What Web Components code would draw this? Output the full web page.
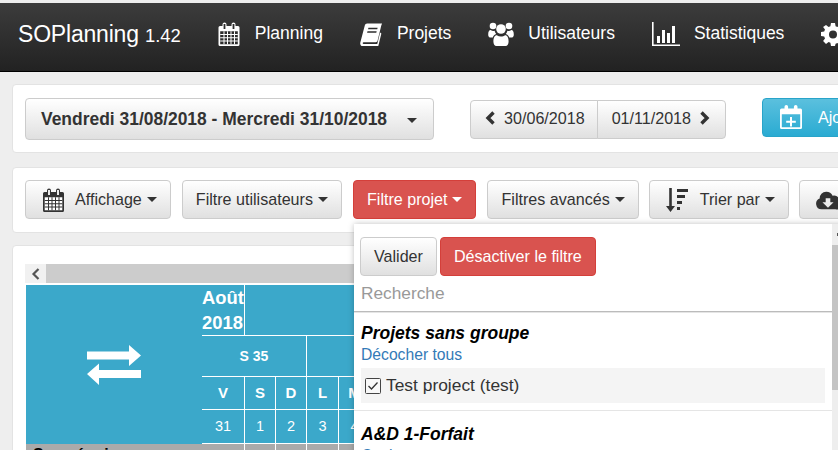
<!DOCTYPE html>
<html lang="fr">
<head>
<meta charset="utf-8">
<title>SOPlanning</title>
<style>
  html, body { margin: 0; height: 450px; overflow: hidden; background: #eee; }
  body { font: 16px/1.43 "Liberation Sans", Arial, sans-serif; color: #333; }
  so-card.c1 { margin-top: 12px; height: 69px; padding: 13px 12px; }
  so-card.c2 { margin-top: 14px; height: 66px; padding: 12px 12px; }
  so-card.c3 { margin-top: 12px; height: 300px; padding: 18px 12px; }
  .g1 { margin-right: 36px; height: 42px; }
  .pager { display: inline-flex; flex: none; margin-right: 36px; height: 39px; }
  .f { height: 39px; margin-right: 11px; }
  .f svg { margin-right: 12px; margin-top: 2px; }
</style>
</head>
<body>
<svg width="0" height="0" style="position:absolute">
  <defs>
    <symbol id="i-cal" viewBox="0 0 24 24">
      <path fill="currentColor" d="M3 4h2.500V2.600a2 2 0 0 1 4 0V4h5V2.600a2 2 0 0 1 4 0V4H21a1.500 1.500 0 0 1 1.500 1.500v17A1.500 1.500 0 0 1 21 24H3a1.500 1.500 0 0 1-1.500-1.500v-17A1.500 1.500 0 0 1 3 4z"/>
      <path fill="var(--i-bg,#2d2d2d)" d="M6.600 1.900h1.800v5H6.600zM15.600 1.900h1.800v5h-1.800zM3.200 9.200h17.600v13H3.200z"/>
      <path fill="currentColor" d="M3.200 12.100h17.600v1H3.200zM3.200 15.300h17.600v1H3.200zM3.200 18.500h17.600v1H3.200zM6.500 9.200h1v13h-1zM10 9.200h1v13h-1zM13.500 9.200h1v13h-1zM17 9.200h1v13h-1z"/>
    </symbol>
    <symbol id="i-book" viewBox="0 0 24 24">
      <path fill="currentColor" d="M7.500 1H23l-.8 2.200-3.800 15.600c-.3 1-.8 1.700-2.200 1.700H4.200c-.8 0-1.400.3-1.400 1 0 .6.600 1 1.400 1H18l3-12 1.300 1-3 12.300c-.2.700-.6 1.200-1.500 1.200H4c-2.200 0-3.800-1.300-3.800-3.200 0-.7.200-1.300.4-2L5 3c.3-1.200 1.200-2 2.500-2z"/>
      <path fill="var(--i-bg,#2d2d2d)" d="M8.800 5.500h9.600l-.4 1.600H8.400zM7.800 9h9.600l-.4 1.600H7.400z"/>
    </symbol>
    <symbol id="i-users" viewBox="0 0 26 24">
      <circle fill="currentColor" cx="5" cy="4" r="3.300"/>
      <circle fill="currentColor" cx="21" cy="4" r="3.300"/>
      <circle fill="currentColor" cx="13" cy="7" r="4.800"/>
      <path fill="currentColor" d="M.2 12.500c0-3 .8-4.500 2.500-4.500 1.200.9 2.600 1.100 3.900.7.200 1.200.8 2.300 1.600 3.200-1.600.4-2.900 1.600-3.400 3.600H2c-1.200 0-1.800-1.400-1.800-3zM25.800 12.500c0-3-.8-4.500-2.500-4.500-1.200.9-2.600 1.100-3.900.7-.2 1.200-.8 2.300-1.600 3.200 1.600.4 2.900 1.600 3.400 3.600H24c1.200 0 1.800-1.400 1.800-3zM8.800 13.200c2.500 1.800 5.900 1.800 8.400 0 2.200 0 3.400 2.500 3.400 6.300 0 2.500-1.200 4.500-3 4.500H8.400c-1.800 0-3-2-3-4.500 0-3.800 1.200-6.300 3.400-6.300z"/>
    </symbol>
    <symbol id="i-chart" viewBox="0 0 28 24">
      <path fill="currentColor" d="M0 0h1.600v22.400H28V24H0zM5 14h3v7H5zM10 8h3v13h-3zM15 11h3v10h-3zM20 4h3v17h-3z"/>
    </symbol>
    <symbol id="i-cog" viewBox="0 0 24 24">
      <path fill="currentColor" fill-rule="evenodd" d="M10 1h4l.6 3.200 1.800.8L19 3.100l2.900 2.900L20 8.600l.8 1.800 3.200.6v4l-3.200.6-.8 1.800 1.900 2.600-2.900 2.900-2.600-1.900-1.800.8L14 24h-4l-.6-3.200-1.800-.8L5 21.900 2.100 19 4 16.400l-.8-1.800L0 14v-4l3.200-.6.800-1.800L2.100 5 5 3.100 7.600 5l1.800-.8zM12 8.500a4 4 0 1 0 0 8 4 4 0 0 0 0-8z"/>
    </symbol>
    <symbol id="i-calplus" viewBox="0 0 24 24">
      <path fill="currentColor" fill-rule="evenodd" d="M2.500 3.500h3V1.800a1.800 1.800 0 0 1 3.600 0v1.700h5.800V1.800a1.800 1.800 0 0 1 3.600 0v1.700h3A1.500 1.500 0 0 1 23 5v17.500a1.500 1.500 0 0 1-1.500 1.500h-19A1.500 1.500 0 0 1 1 22.500V5a1.500 1.500 0 0 1 1.500-1.500zM2.800 9.200v13h18.400v-13z"/>
      <path fill="currentColor" d="M11 12h2v3.800h3.800v2H13v3.700h-2v-3.700H7.200v-2H11z"/>
    </symbol>
    <symbol id="i-sort" viewBox="0 0 22 24">
      <path fill="currentColor" d="M3.200 0h2.600v18H9l-4.500 6L0 18h3.200zM11 1h11v3H11zM11 7h8v3h-8zM11 13h5v3h-5zM11 19h3v3h-3z"/>
    </symbol>
    <symbol id="i-cloud" viewBox="0 0 26 20">
      <path fill="currentColor" fill-rule="evenodd" d="M6 20a6 6 0 0 1-2-11.600A7 7 0 0 1 11 1a7.500 7.500 0 0 1 7 4.300A5.500 5.500 0 0 1 25 10a5 5 0 0 1-4 10zM10.500 8v4.500H7l6 6 6-6h-3.500V8z"/>
    </symbol>
  </defs>
</svg>

<template id="t-btn">
  <style>
    :host { display: inline-flex; flex: none; }
    .b { display: inline-flex; align-items: center; box-sizing: border-box; height: 100%; white-space: nowrap;
         font-size: 16.1px; line-height: 20px; padding: 7px var(--pad-r, 13px) 9px var(--pad-l, 13px); border: 1px solid #ccc;
         border-radius: var(--rad, 4px); color: #333; background: linear-gradient(#fff, #e0e0e0); }
    :host([danger]) .b { color: #fff; background: #d9534f; border-color: #d43f3a; }
    :host([info]) .b { color: #fff; background: linear-gradient(#5bc0de, #2aabd2); border-color: #28a4c9; }
    :host([strong]) .b { font-weight: 700; font-size: 17.45px; padding: 8px 16px 8px 15px; }
    ::slotted(svg) { display: block; flex: none; }
  </style>
  <span class="b"><slot></slot></span>
</template>

<script>
class SoBtn extends HTMLElement {
  constructor() {
    super();
    this.attachShadow({ mode: 'open' });
    this.shadowRoot.appendChild(document.getElementById('t-btn').content.cloneNode(true));
  }
}
customElements.define('so-btn', SoBtn);

class SoCaret extends HTMLElement {
  constructor() {
    super();
    this.attachShadow({ mode: 'open' }).innerHTML = `
      <style>
        :host { display: inline-block; width: 0; height: 0; margin-left: var(--caret-gap, 5px); margin-top: 2px;
                border-top: 5px solid currentColor; border-left: 5px solid transparent; border-right: 5px solid transparent; }
      </style>`;
  }
}
customElements.define('so-caret', SoCaret);

class SoNavLink extends HTMLElement {
  constructor() {
    super();
    this.attachShadow({ mode: 'open' }).innerHTML = `
      <style>
        :host { display: flex; align-items: center; flex: none; gap: 14px; color: #fff; font-size: 17.5px; }
        ::slotted(svg) { display: block; }
      </style>
      <slot></slot>`;
  }
}
customElements.define('so-nav-link', SoNavLink);

class SoNavbar extends HTMLElement {
  constructor() {
    super();
    this.attachShadow({ mode: 'open' }).innerHTML = `
      <style>
        :host { display: block; margin-top: 3px; height: 69px; box-sizing: border-box; overflow: hidden;
                background: linear-gradient(#3c3c3c, #222); border-bottom: 1px solid #000; }
        .in { display: flex; align-items: center; height: 46px; padding: 8px 0 0 18px; white-space: nowrap; color: #fff; }
        .brand { font-size: 23px; margin-right: 36px; flex: none; letter-spacing: -.2px; }
        .brand small { font-size: 18.400px; letter-spacing: 0; }
        .links { display: flex; align-items: center; gap: 37px; }
      </style>
      <div class="in">
        <span class="brand">SOPlanning <small>1.42</small></span>
        <div class="links"><slot></slot></div>
      </div>`;
  }
}
customElements.define('so-navbar', SoNavbar);

class SoCard extends HTMLElement {
  constructor() {
    super();
    this.attachShadow({ mode: 'open' }).innerHTML = `
      <style>
        :host { display: block; box-sizing: border-box; margin: 0 -120px 0 12px; background: #fff;
                border: 1px solid #e3e3e3; border-radius: 4px; }
        .row { display: flex; align-items: center; white-space: nowrap; }
      </style>
      <div class="row"><slot></slot></div>`;
  }
}
customElements.define('so-card', SoCard);

class SoPlanning extends HTMLElement {
  constructor() {
    super();
    this.attachShadow({ mode: 'open' }).innerHTML = `
      <style>
        :host { display: block; overflow: hidden; color: #fff; font-weight: 700; }
        .bar { display: flex; height: 19px; margin-bottom: 2px; background: #ccc; }
        .bar span { width: 21px; background: #f1f1f1; display: flex; align-items: center; justify-content: center; }
        .tbl { display: grid; margin-left: 1px; grid-template-columns: 176px 43px 31px 31px 32px 32px 300px;
               grid-template-rows: 51px 41px 33px 34px 20px; background: #3ba8ca; }
        .tbl > div { box-sizing: border-box; display: flex; align-items: center; justify-content: center;
                     border-right: 1px solid #fff; border-bottom: 1px solid #fff; }
        .corner { grid-row: 1 / 5; border: 0 !important; }
        .month { font-size: 18.400px; line-height: 25px; justify-content: flex-start !important; white-space: nowrap; }
        .blank { grid-column: 3 / 8; }
        .wk { grid-column: 2 / 5; font-size: 14px; }
        .wk2 { grid-column: 5 / 8; }
        .dy { font-size: 15px; }
        .num { font-weight: 400; font-size: 14.500px; }
        .foot { background: #aaa; color: #000; border-bottom: 0 !important; }
        .foot.name { justify-content: flex-start !important; border: 0 !important; padding: 2px 0 0 7px;
                     font-size: 16px; align-items: flex-start !important; line-height: 18px; white-space: nowrap; }
      </style>
      <div class="bar"><span><svg width="10" height="12" viewBox="0 0 10 12"><path d="M7.500 1 2.500 6l5 5" fill="none" stroke="#555" stroke-width="2.200"/></svg></span></div>
      <div class="tbl">
        <div class="corner"><svg width="54" height="40" viewBox="0 0 54 40"><path fill="#fff" d="M0 6.500h42V0l12 10.500L42 21v-6.500H0zM54 25H12v-6.500L0 29l12 11v-7h42z"/></svg></div>
        <div class="month"><span>Août<br>2018</span></div><div class="blank"></div>
        <div class="wk">S 35</div><div class="wk2"></div>
        <div class="dy">V</div><div class="dy">S</div><div class="dy">D</div><div class="dy">L</div><div class="dy">M</div><div></div>
        <div class="num">31</div><div class="num">1</div><div class="num">2</div><div class="num">3</div><div class="num">4</div><div></div>
        <div class="foot name">Sans équipe</div><div class="foot"></div><div class="foot"></div><div class="foot"></div><div class="foot"></div><div class="foot"></div><div class="foot"></div>
      </div>`;
  }
}
customElements.define('so-planning', SoPlanning);

class SoProjectGroup extends HTMLElement {
  constructor() {
    super();
    this.attachShadow({ mode: 'open' });
  }

  connectedCallback() {
    const title = this.getAttribute('title') || '';
    const link = this.getAttribute('link') || '';
    this.shadowRoot.innerHTML = `
      <style>
        :host { display: block; padding: 8px 7px 7px; border-top: 1px solid #e5e5e5; }
        h4 { margin: 0; font: italic 700 17.500px/24px "Liberation Sans", Arial, sans-serif; color: #000; }
        a { display: block; color: #337ab7; font-size: 15.700px; line-height: 20px; margin-bottom: 3px; }
      </style>
      <h4>${title}</h4>
      <a>${link}</a>
      <slot></slot>`;
  }
}
customElements.define('so-project-group', SoProjectGroup);

class SoProjectItem extends HTMLElement {
  constructor() {
    super();
    this.attachShadow({ mode: 'open' }).innerHTML = `
      <style>
        :host { display: flex; align-items: center; height: 35px; padding-left: 4px; gap: 5px; background: #f4f4f4; font-size: 17.400px; color: #333; }
        svg { display: block; }
      </style>
      <svg width="16" height="16" viewBox="0 0 16 16"><rect x=".5" y=".5" width="15" height="15" rx="1" fill="#f8f8f8" stroke="#444"/><path d="M3.500 8l3 3 6-6.500" fill="none" stroke="#333" stroke-width="1.300"/></svg>
      <slot></slot>`;
  }
}
customElements.define('so-project-item', SoProjectItem);

class SoFilterMenu extends HTMLElement {
  constructor() {
    super();
    this.attachShadow({ mode: 'open' }).innerHTML = `
      <style>
        :host { position: absolute; left: 354px; top: 224px; width: 500px; height: 240px; display: flex; background: #fff;
                box-shadow: 0 0 6px rgba(0,0,0,.25); overflow: hidden; }
        .content { width: 478px; flex: none; }
        .top { display: flex; gap: 3px; padding: 13px 0 0 6px; }
        .top so-btn { height: 39px; }
        .search { padding: 0 7px; font-size: 17.300px; line-height: 34px; color: #999; height: 35px; border-bottom: 1px solid #bbb; }
        .scroll { flex: 1; display: flex; flex-direction: column; background: #eee; }
        .arrow { height: 21px; position: relative; }
        .arrow::after { content: ""; position: absolute; left: 5px; top: 9px; width: 4px; height: 3px; background: #555; }
        .thumb { height: 145px; background: #c4c4c4; }
      </style>
      <div class="content">
        <div class="top"><so-btn>Valider</so-btn><so-btn danger>Désactiver le filtre</so-btn></div>
        <div class="search">Recherche</div>
        <slot></slot>
      </div>
      <div class="scroll"><div class="arrow"></div><div class="thumb"></div></div>`;
  }
}
customElements.define('so-filter-menu', SoFilterMenu);
</script>

<so-navbar>
  <so-nav-link><svg width="24" height="24" style="color:#fff"><use href="#i-cal"/></svg>Planning</so-nav-link>
  <so-nav-link><svg width="23" height="24" style="color:#fff"><use href="#i-book"/></svg>Projets</so-nav-link>
  <so-nav-link><svg width="26" height="24"><use href="#i-users"/></svg>Utilisateurs</so-nav-link>
  <so-nav-link><svg width="28" height="24"><use href="#i-chart"/></svg>Statistiques</so-nav-link>
  <so-nav-link><svg width="24" height="24"><use href="#i-cog"/></svg>Paramètres</so-nav-link>
</so-navbar>

<so-card class="c1">
  <so-btn strong class="g1">Vendredi 31/08/2018 - Mercredi 31/10/2018<so-caret style="--caret-gap:20px"></so-caret></so-btn>
  <span class="pager">
    <so-btn style="--rad:4px 0 0 4px;--pad-l:14px;--pad-r:12px"><svg width="11" height="14" viewBox="0 0 11 14" style="margin-right:8px"><path d="M8.500 1.500 3 7l5.500 5.500" fill="none" stroke="#333" stroke-width="3.400"/></svg>30/06/2018</so-btn>
    <so-btn style="margin-left:-1px;--rad:0 4px 4px 0;--pad-l:14px;--pad-r:15px">01/11/2018<svg width="11" height="14" viewBox="0 0 11 14" style="margin-left:8px"><path d="M2.500 1.500 8 7l-5.500 5.500" fill="none" stroke="#333" stroke-width="3.400"/></svg></so-btn>
  </span>
  <so-btn info style="height:39px;align-self:flex-start"><svg width="24" height="24" style="margin:0 15px 0 3px"><use href="#i-calplus"/></svg>Ajouter</so-btn>
</so-card>

<so-card class="c2">
  <so-btn class="f"><svg width="21" height="24" viewBox="1.500 0 21 24" style="--i-bg:#fff;color:#333;margin:2px 11px 0 4px"><use href="#i-cal" width="24" height="24"/></svg>Affichage<so-caret></so-caret></so-btn>
  <so-btn class="f">Filtre utilisateurs<so-caret></so-caret></so-btn>
  <so-btn class="f" danger>Filtre projet<so-caret></so-caret></so-btn>
  <so-btn class="f" style="margin-right:10px">Filtres avancés<so-caret></so-caret></so-btn>
  <so-btn class="f" style="margin-right:10px"><svg width="22" height="24" style="margin-left:3px"><use href="#i-sort"/></svg>Trier par<so-caret></so-caret></so-btn>
  <so-btn class="f"><svg width="24" height="20" style="margin-left:3px"><use href="#i-cloud"/></svg>Exporter</so-btn>
</so-card>

<so-card class="c3"><so-planning></so-planning></so-card>

<so-filter-menu>
  <so-project-group title="Projets sans groupe" link="Décocher tous">
    <so-project-item>Test project (test)</so-project-item>
  </so-project-group>
  <so-project-group style="padding-top:11px" title="A&amp;D 1-Forfait" link="Cocher tous"></so-project-group>
</so-filter-menu>
</body>
</html>
